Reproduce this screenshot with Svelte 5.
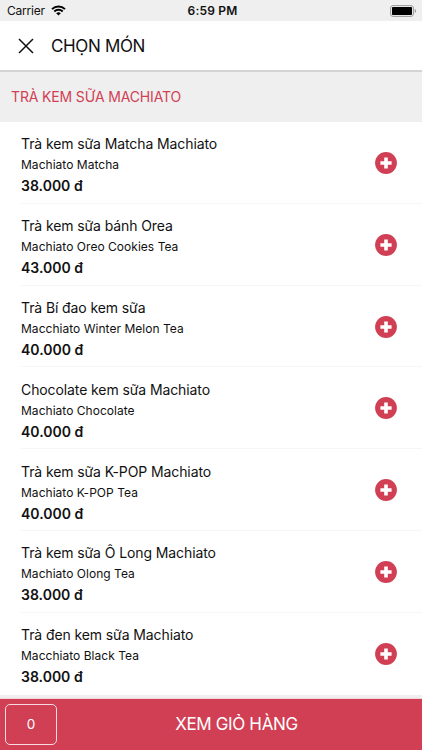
<script lang="ts">
	interface Drink {
		name: string
		subtitle: string
		price: string
	}

	const drinks: Drink[] = [
		{ name: 'Trà kem sữa Matcha Machiato', subtitle: 'Machiato Matcha', price: '38.000 đ' },
		{ name: 'Trà kem sữa bánh Orea', subtitle: 'Machiato Oreo Cookies Tea', price: '43.000 đ' },
		{ name: 'Trà Bí đao kem sữa', subtitle: 'Macchiato Winter Melon Tea', price: '40.000 đ' },
		{ name: 'Chocolate kem sữa Machiato', subtitle: 'Machiato Chocolate', price: '40.000 đ' },
		{ name: 'Trà kem sữa K-POP Machiato', subtitle: 'Machiato K-POP Tea', price: '40.000 đ' },
		{ name: 'Trà kem sữa Ô Long Machiato', subtitle: 'Machiato Olong Tea', price: '38.000 đ' },
		{ name: 'Trà đen kem sữa Machiato', subtitle: 'Macchiato Black Tea', price: '38.000 đ' }
	]

	let count = $state(0)
</script>

<div class="screen">
	<div class="status">
		<div class="carrier">
			<span>Carrier</span>
			<svg width="15" height="11" viewBox="0 0 15 11" aria-hidden="true">
				<path d="M1 4.1a9.4 9.4 0 0 1 13 0" />
				<path d="M3.3 6.5a6.1 6.1 0 0 1 8.4 0" />
				<path class="dot" d="M7.5 10.6 5.2 8.3a3.3 3.3 0 0 1 4.6 0z" />
			</svg>
		</div>
		<span class="time">6:59 PM</span>
		<svg class="battery" width="27" height="12" viewBox="0 0 27 12" aria-hidden="true">
			<rect class="shell" x="0.6" y="0.6" width="22.8" height="10.8" rx="2.4" />
			<rect x="2" y="2" width="20" height="8" rx="0.8" />
			<path class="cap" d="M24.7 4c1.8.5 1.8 3.5 0 4z" />
		</svg>
	</div>

	<header>
		<button class="close" aria-label="Đóng">
			<svg width="16" height="16" viewBox="0 0 16 16">
				<path d="M1 1l14 14M15 1L1 15" />
			</svg>
		</button>
		<h1>CHỌN MÓN</h1>
	</header>

	<h2>TRÀ KEM SỮA MACHIATO</h2>

	<ul>
		{#each drinks as drink}
			<li>
				<div class="info">
					<p class="name">{drink.name}</p>
					<p class="subtitle">{drink.subtitle}</p>
					<p class="price">{drink.price}</p>
				</div>
				<button class="add" aria-label="Thêm {drink.name}" onclick={() => count++}>
					<svg width="22" height="22" viewBox="0 0 22 22">
						<circle cx="11" cy="11" r="10.9" />
						<path d="M9.2 5.4h3.6v3.8h3.8v3.6h-3.8v3.8H9.2v-3.8H5.4V9.2h3.8z" />
					</svg>
				</button>
			</li>
		{/each}
	</ul>

	<footer>
		<span class="count">{count}</span>
		<button class="cart">XEM GIỎ HÀNG</button>
	</footer>
</div>

<style>
	:global(body) {
		margin: 0;
	}

	.screen {
		--brand: #d13f55;
		display: flex;
		flex-direction: column;
		box-sizing: border-box;
		width: 422px;
		height: 750px;
		overflow: hidden;
		background: #efefef;
		color: #111;
		font-family: Inter, 'Noto Sans', sans-serif;
	}

	h1,
	h2,
	p,
	ul {
		margin: 0;
		padding: 0;
		font-weight: 400;
	}

	button {
		padding: 0;
		border: 0;
		background: none;
		font: inherit;
		color: inherit;
		cursor: pointer;
	}

	svg {
		display: block;
	}

	.status {
		display: grid;
		grid-template-columns: 1fr auto 1fr;
		align-items: center;
		flex: none;
		height: 21px;
		padding: 0 5px 0 7px;
		font-size: 12px;
	}

	.carrier {
		display: flex;
		align-items: center;
		gap: 6px;
		letter-spacing: -0.2px;

		path {
			fill: none;
			stroke: #000;
			stroke-width: 2;
		}

		.dot {
			fill: #000;
			stroke: none;
		}
	}

	.time {
		padding-left: 1px;
		font-weight: 600;
		letter-spacing: 0.2px;
	}

	.battery {
		justify-self: end;

		.shell {
			fill: none;
			stroke: #999;
			stroke-width: 1;
		}

		.cap {
			fill: #999;
		}
	}

	header {
		display: flex;
		align-items: center;
		flex: none;
		height: 49px;
		padding-left: 18px;
		border-bottom: 2px solid #d3d3d3;
		background: #fff;
	}

	.close path {
		fill: none;
		stroke: #111;
		stroke-width: 1.5;
	}

	h1 {
		margin-left: 17px;
		font-size: 17px;
		letter-spacing: -0.35px;
	}

	h2 {
		flex: none;
		height: 50px;
		padding-left: 11px;
		color: var(--brand);
		font-size: 14px;
		line-height: 50px;
		letter-spacing: -0.15px;
	}

	ul {
		flex: none;
		background: #fff;
		list-style: none;
	}

	li {
		display: flex;
		align-items: center;
		justify-content: space-between;
		box-sizing: border-box;
		height: 81.8px;
		margin-left: 21px;
		padding-right: 25px;
		border-bottom: 1px solid #f6f6f6;

		&:last-child {
			border-bottom-color: transparent;
		}
	}

	.info {
		padding-top: 5.2px;
	}

	.name {
		font-size: 14px;
		line-height: 21px;
		letter-spacing: -0.1px;
	}

	.subtitle {
		font-size: 12px;
		line-height: 21px;
		letter-spacing: 0.03px;
	}

	.price {
		font-size: 14px;
		font-weight: 600;
		line-height: 21px;
	}

	.add {
		padding-top: 1.2px;

		circle {
			fill: var(--brand);
		}

		path {
			fill: #fff;
		}
	}

	footer {
		display: flex;
		align-items: center;
		box-sizing: border-box;
		height: 52px;
		margin-top: auto;
		padding-left: 5px;
		border-top: 1px solid #f6d3da;
		background: var(--brand);
		color: #fff;
	}

	.count {
		box-sizing: border-box;
		width: 52px;
		height: 41px;
		border: 1px solid #f7dbe0;
		border-radius: 5px;
		font-size: 13.5px;
		line-height: 39px;
		text-align: center;
	}

	.cart {
		flex: 1;
		padding: 0 6px 2px 0;
		font-size: 17px;
		letter-spacing: -0.35px;
	}
</style>
